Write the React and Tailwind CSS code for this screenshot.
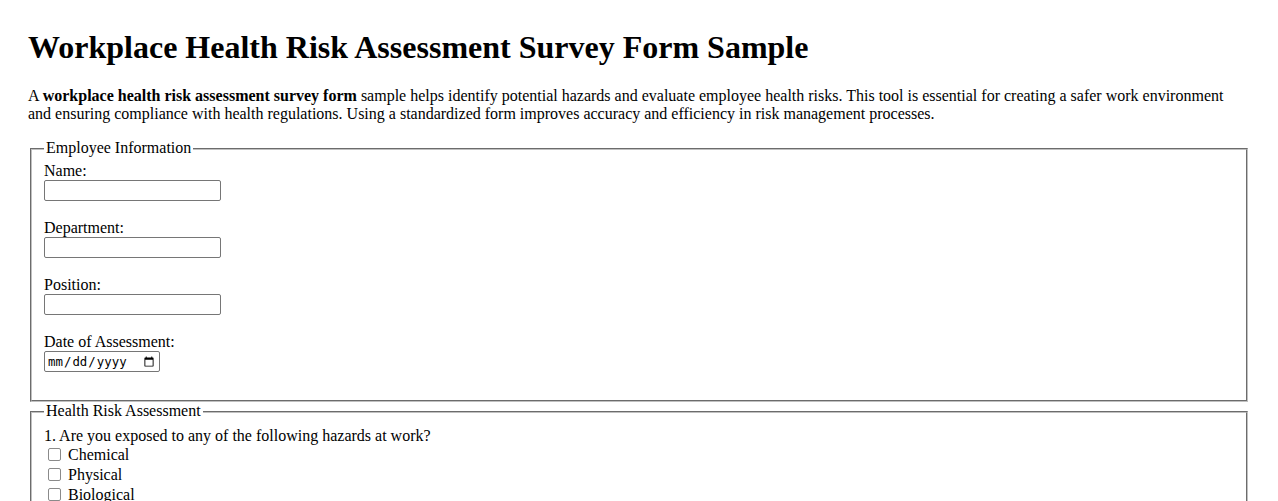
import React from "react";

function Field({ label, type = "text" }) {
  return (
    <div className="flex flex-col items-start">
      <label className="h-[18px] leading-[18px]">{label}</label>
      {type === "date" ? (
        <input
          type="date"
          className="w-[116px] h-[21px] border border-[#767676] rounded-[2px] bg-white pl-[2px] pr-[2px] text-[12.4px] leading-[15px] [font-family:'DejaVu_Sans_Mono',monospace] text-black"
        />
      ) : (
        <input
          type="text"
          className="w-[177px] h-[21px] border border-[#767676] rounded-[2px] bg-white px-[2px] text-[13.33px]"
        />
      )}
      <div className="h-[18px]" />
    </div>
  );
}

function Check({ label }) {
  return (
    <div className="flex items-center h-[20px]">
      <span className="ml-[4px] mr-[7px] w-[13px] h-[13px] border border-[#8a8a8a] rounded-[2px] bg-white box-border" />
      <span className="leading-[20px]">{label}</span>
    </div>
  );
}

export default function App() {
  return (
    <div className="bg-white text-black text-[16px] leading-[18.4px] [font-family:'Liberation_Serif','Times_New_Roman',serif] px-[28px] pt-[29px] min-h-[501px] overflow-hidden">
      <h1 className="text-[32px] font-bold leading-[37px] m-0">
        Workplace Health Risk Assessment Survey Form Sample
      </h1>
      <p className="mt-[20.5px] mb-[16px]">
        A <strong className="font-bold">workplace health risk assessment survey form</strong> sample helps identify potential hazards and evaluate employee health risks. This tool is essential for creating a safer work environment and ensuring compliance with health regulations. Using a standardized form improves accuracy and efficiency in risk management processes.
      </p>
      <form>
        <fieldset className="mx-[2px] border-2 [border-style:groove] border-[rgb(192,192,192)] px-[12px] pt-[4.6px] pb-[10px]">
          <legend className="px-[2px] leading-[18.4px]">Employee Information</legend>
          <Field label="Name:" />
          <Field label="Department:" />
          <Field label="Position:" />
          <Field label="Date of Assessment:" type="date" />
        </fieldset>
        <fieldset className="mx-[2px] border-2 [border-style:groove] border-[rgb(192,192,192)] px-[12px] pt-[5.6px] pb-[10px]">
          <legend className="px-[2px] leading-[18.4px]">Health Risk Assessment</legend>
          <p className="h-[18.4px] leading-[20px]">1. Are you exposed to any of the following hazards at work?</p>
          <Check label="Chemical" />
          <Check label="Physical" />
          <Check label="Biological" />
          <Check label="Ergonomic" />
          <Check label="Psychosocial" />
        </fieldset>
      </form>
    </div>
  );
}
